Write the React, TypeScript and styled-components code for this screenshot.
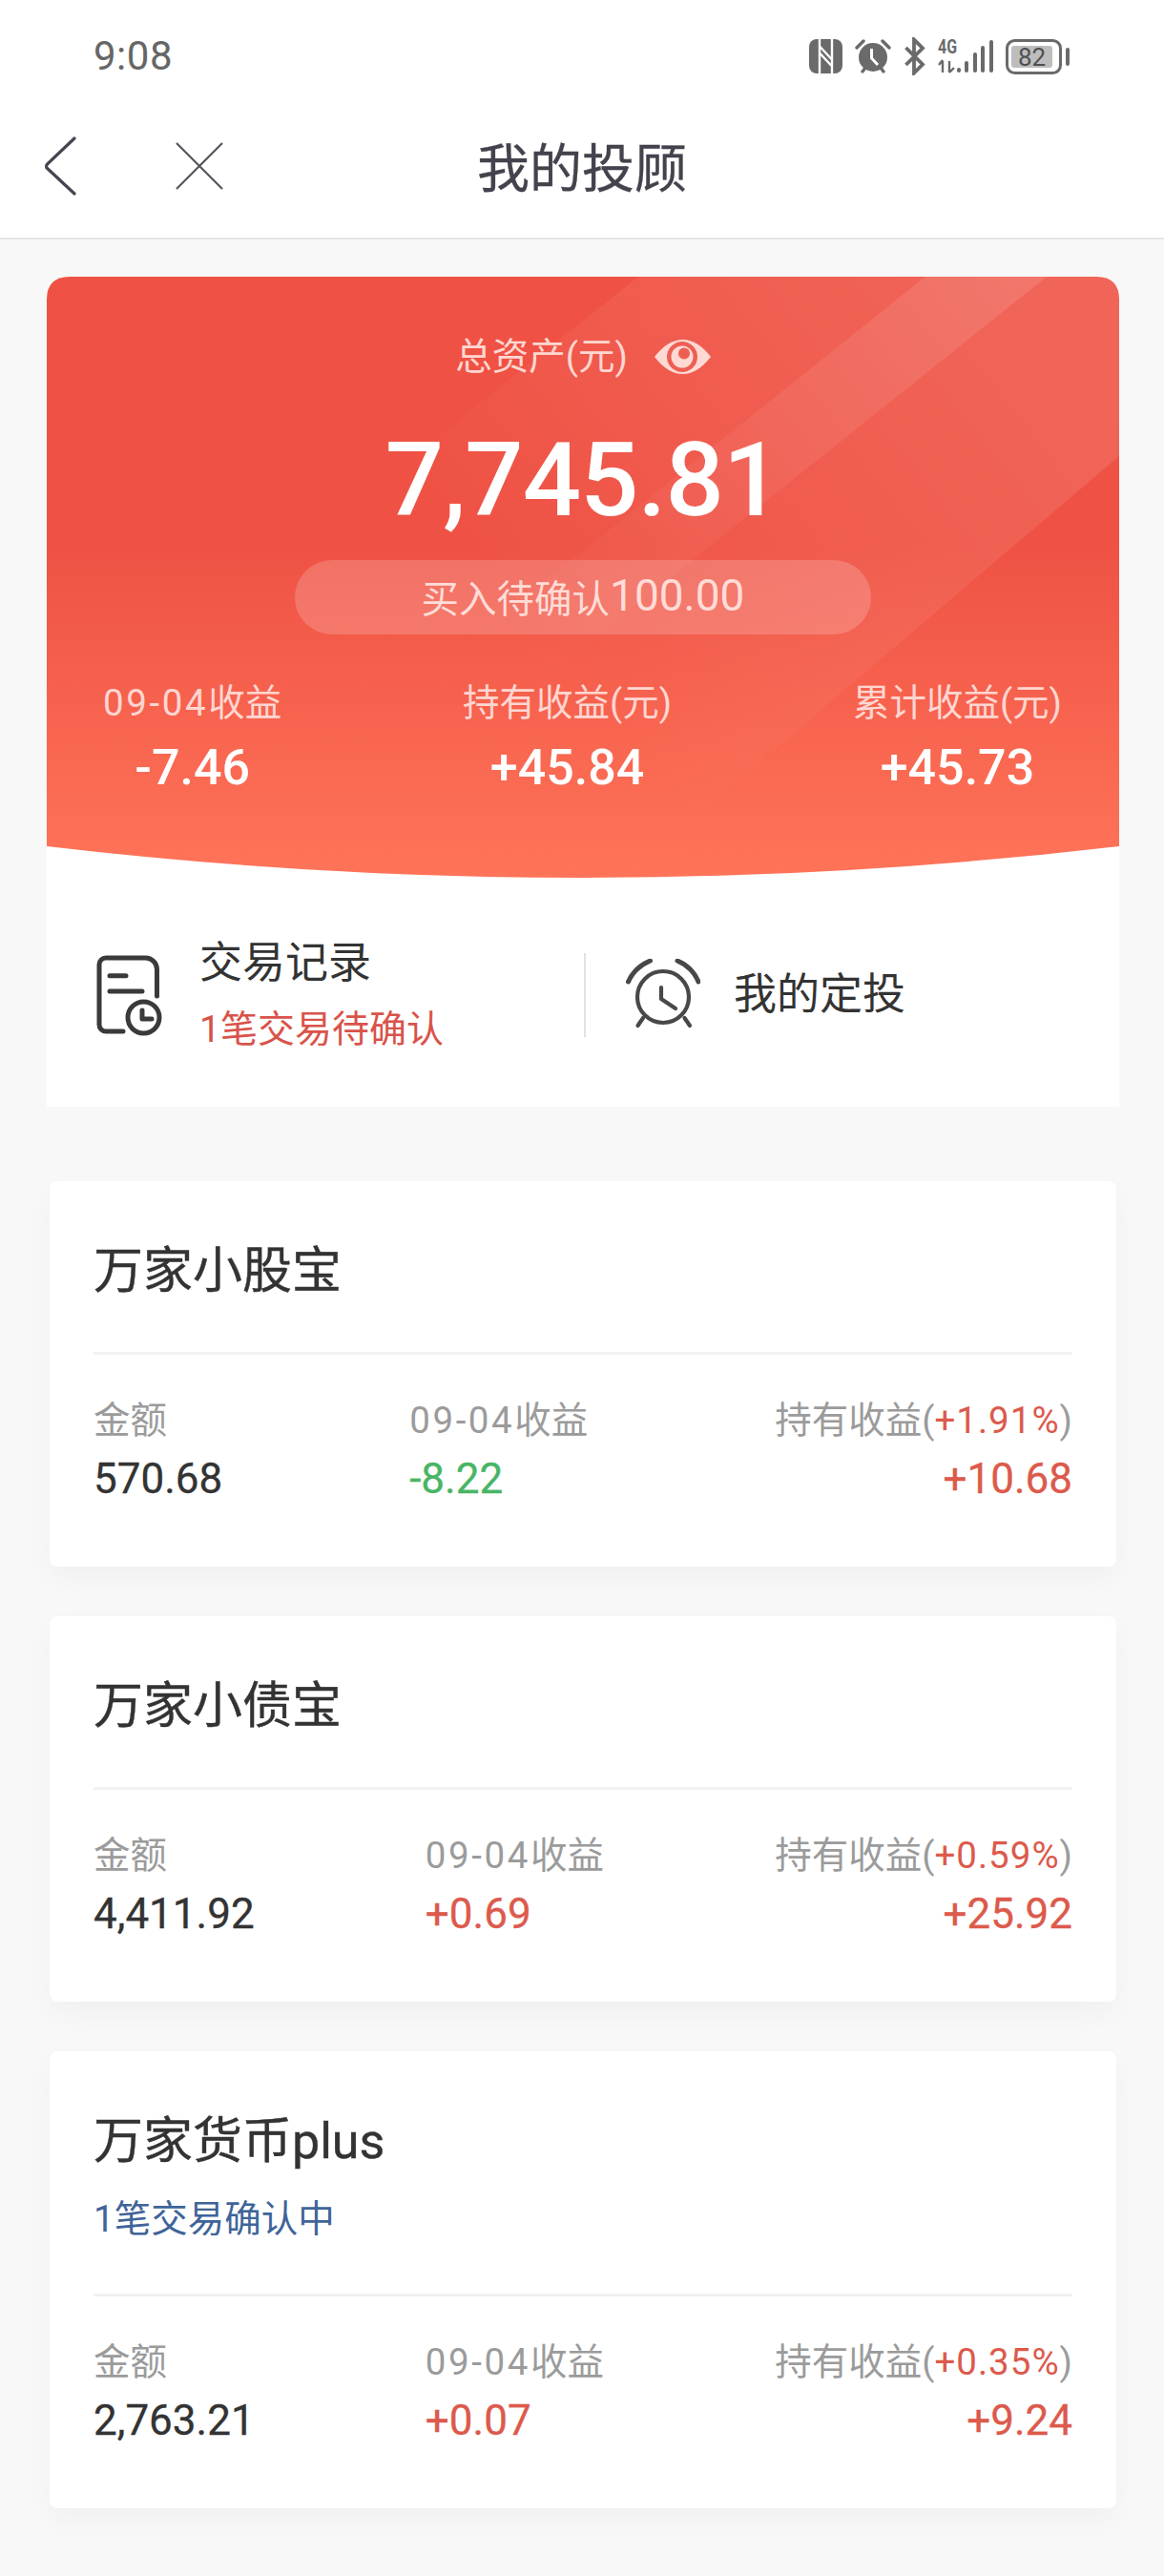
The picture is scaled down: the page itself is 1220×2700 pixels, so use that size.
import React from "react";
import styled, { createGlobalStyle } from "styled-components";

const Global = createGlobalStyle`
  html, body { margin: 0; padding: 0; background: #f8f8f8; }
  body { font-family: Roboto, "Noto Sans CJK SC", sans-serif; }
  * { box-sizing: border-box; }
`;

const Page = styled.div`
  width: 1220px;
  min-height: 2700px;
  background: #f8f8f8;
`;

const Header = styled.header`
  height: 251px;
  background: #fff;
  border-bottom: 2px solid #e6e6e6;
`;

const StatusBar = styled.div`
  height: 110px;
  padding: 8px 99px 0 98px;
  display: flex;
  align-items: center;
  justify-content: space-between;
`;

const Clock = styled.span`
  font-size: 42px;
  line-height: 44px;
  color: #666;
  letter-spacing: 0.5px;
`;

const StatusIcons = styled.div`
  display: flex;
  align-items: center;
  gap: 13px;
`;

const Nav = styled.nav`
  display: grid;
  grid-template-columns: 1fr auto 1fr;
  align-items: center;
  height: 128px;
`;

const NavLeft = styled.div`
  display: flex;
  align-items: center;
  gap: 104px;
  padding-left: 47px;
`;

const NavTitle = styled.h1`
  margin: 0;
  padding-top: 5px;
  font-size: 55px;
  line-height: 64px;
  font-weight: 400;
  -webkit-text-stroke: 0.3px #43434d;
  color: #43434d;
`;

const HeroCard = styled.section`
  margin: 39px 47px 0 49px;
  background: #fff;
  border-radius: 24px 24px 0 0;
`;

const HeroRed = styled.div`
  position: relative;
  height: 630px;
  padding-top: 62px;
  background: linear-gradient(180deg, #ef5244 0%, #ef5244 45%, #ff7459 100%);
  clip-path: path("M0 24 Q0 0 24 0 H1100 Q1124 0 1124 24 V597 Q562 663 0 597 Z");
`;

const HeroDecor = styled.svg`
  position: absolute;
  inset: 0;
`;

const HeroContent = styled.div`
  position: relative;
`;

const TotalLabel = styled.div`
  display: flex;
  align-items: center;
  justify-content: center;
  gap: 28px;
  height: 44px;
  font-size: 38.5px;
  line-height: 44px;
  color: #ffd6d1;
`;

const TotalValue = styled.div`
  margin-top: 47px;
  text-align: center;
  font-size: 108px;
  line-height: 120px;
  font-weight: 500;
  color: #fff;
  letter-spacing: -1px;
`;

const Pending = styled.div`
  margin: 24px auto 0;
  width: 604px;
  height: 78px;
  padding-bottom: 4px;
  border-radius: 39px;
  background: rgba(255, 255, 255, 0.18);
  display: flex;
  align-items: center;
  justify-content: center;
  font-size: 39.5px;
  color: #ffdcd7;
`;

const PendingAmount = styled.span`
  font-size: 46px;
`;

const Stats = styled.div`
  margin-top: 50px;
  padding: 0 60px 0 59px;
  display: flex;
  justify-content: space-between;
`;

const Stat = styled.div`
  text-align: center;
`;

const StatLabel = styled.div`
  font-size: 38.5px;
  line-height: 44px;
  color: #ffd6d1;
`;

const DateText = styled.span`
  letter-spacing: 2.6px;
`;

const StatValue = styled.div`
  margin-top: 16px;
  font-size: 52px;
  line-height: 60px;
  font-weight: 500;
  color: #fff;
`;

const Actions = styled.div`
  height: 240px;
  padding-top: 6px;
  display: grid;
  grid-template-columns: 563px 2px 1fr;
  align-items: center;
`;

const Action = styled.div<{ $gap: number; $pad: number }>`
  display: flex;
  align-items: center;
  gap: ${(p) => p.$gap}px;
  padding-left: ${(p) => p.$pad}px;
`;

const ActionDivider = styled.div`
  height: 88px;
  background: #e2e2e2;
`;

const ActionTitle = styled.div`
  font-size: 45px;
  line-height: 54px;
  color: #333;
`;

const ActionNote = styled.div`
  margin-top: 18px;
  font-size: 39px;
  line-height: 48px;
  color: #d9534a;
`;

const Cards = styled.div`
  margin: 78px 50px 0 52px;
  display: flex;
  flex-direction: column;
  gap: 52px;
`;

const Card = styled.article`
  padding: 65px 46px 64px;
  background: #fff;
  border-radius: 8px;
  box-shadow: 0 12px 30px rgba(0, 0, 0, 0.035);
`;

const CardTitle = styled.h2`
  margin: 0;
  font-size: 52px;
  line-height: 60px;
  font-weight: 400;
  -webkit-text-stroke: 0.4px #333;
  color: #333;
`;

const CardNote = styled.div`
  margin-top: 27px;
  font-size: 38.5px;
  line-height: 48px;
  color: #3f6499;
`;

const CardRule = styled.div`
  margin-top: 54px;
  height: 3px;
  background: #f2f2f2;
`;

const Metrics = styled.div`
  margin-top: 47px;
  display: flex;
  justify-content: space-between;
`;

const Metric = styled.div<{ $end?: boolean }>`
  text-align: ${(p) => (p.$end ? "right" : "left")};
`;

const MetricLabel = styled.div`
  font-size: 38.5px;
  line-height: 44px;
  color: #9b9b9b;
  white-space: nowrap;
`;

const Pct = styled.span`
  color: #dc5a4c;
  letter-spacing: 1px;
`;

const MetricValue = styled.div<{ $tone: "ink" | "up" | "down" }>`
  margin-top: 11px;
  font-size: 44px;
  line-height: 56px;
  white-space: nowrap;
  -webkit-text-stroke: 0.3px currentColor;
  color: ${(p) => (p.$tone === "up" ? "#dc5a4c" : p.$tone === "down" ? "#49b565" : "#333")};
`;

const G = "#6a6a6a";

const NfcIcon = () => (
  <svg width="35" height="36" viewBox="0 0 35 36">
    <rect width="35" height="36" rx="8" fill={G} />
    <path d="M11 -1V37M24 -1V37" stroke="#fff" strokeWidth="2.4" />
    <path d="M11.5 8L23.5 21M11.5 15L23.5 28" stroke="#fff" strokeWidth="2.4" />
  </svg>
);

const AlarmFilled = () => (
  <svg width="38" height="36" viewBox="0 0 38 36">
    <circle cx="19" cy="19" r="15" fill={G} />
    <path d="M2 9L9 2M36 9L29 2M8 34L11 30M30 34L27 30" stroke={G} strokeWidth="3.4" strokeLinecap="round" />
    <path d="M17.5 10V20L24 27" stroke="#fff" strokeWidth="3" fill="none" />
  </svg>
);

const BluetoothIcon = () => (
  <svg width="23" height="40" viewBox="0 0 23 40">
    <path d="M2.5 11L20 28.5L11 37.5V2.5L20 11.5L2.5 29" fill="none" stroke={G} strokeWidth="3.8" />
  </svg>
);

const SignalIcon = () => (
  <svg width="58" height="46" viewBox="0 -4 58 46">
    <text x="0" y="16" fontSize="20" fontWeight="700" fill={G} textLength="20" lengthAdjust="spacingAndGlyphs" fontFamily="Roboto, sans-serif">4G</text>
    <path d="M5 24V36M5 23L1 28M12 24V36M12 36L17 31" stroke={G} strokeWidth="2.4" fill="none" />
    <g fill={G}>
      <rect x="20" y="31" width="4" height="5" rx="2" />
      <rect x="28" y="24" width="4" height="12" rx="2" />
      <rect x="37" y="15" width="4" height="21" rx="2" />
      <rect x="45" y="8" width="4" height="28" rx="2" />
      <rect x="54" y="2" width="4" height="34" rx="2" />
    </g>
  </svg>
);

const BatteryIcon = () => (
  <svg width="67" height="37" viewBox="0 0 67 37">
    <rect x="1.5" y="1.5" width="56" height="34" rx="8" fill="none" stroke={G} strokeWidth="3" />
    <rect x="6" y="7" width="43" height="23" rx="3" fill="#bdbdbd" />
    <rect x="63" y="9" width="4" height="19" rx="2" fill={G} />
    <text x="27.5" y="28" fontSize="26" fill="#4f4f4f" textAnchor="middle" fontFamily="Roboto, sans-serif">82</text>
  </svg>
);

const BackIcon = () => (
  <svg width="33" height="62" viewBox="0 0 33 62">
    <path d="M31 2L2.5 29Q1 31 2 33L31 60" fill="none" stroke="#45454f" strokeWidth="3.2" strokeLinecap="round" />
  </svg>
);

const CloseIcon = () => (
  <svg width="50" height="50" viewBox="0 0 50 50">
    <path d="M1 1L49 49M49 1L1 49" stroke="#55555e" strokeWidth="2.2" />
  </svg>
);

const EyeIcon = () => (
  <svg width="59" height="36" viewBox="0 0 59 36">
    <path d="M0 18Q14 0 29.5 0T59 18Q45 36 29.5 36T0 18Z" fill="#ffd9d4" />
    <circle cx="29" cy="18" r="16" fill="#ee5f53" />
    <circle cx="29" cy="18" r="11.5" fill="#ffd9d4" />
    <circle cx="31" cy="14.5" r="6" fill="#ee5f53" />
  </svg>
);

const RecordIcon = () => (
  <svg width="70" height="85" viewBox="0 0 70 85">
    <g fill="none" stroke="#3a3a3a" strokeWidth="5" strokeLinecap="round" strokeLinejoin="round">
      <path d="M63.5 43V15a12 12 0 0 0-12-12H10a7 7 0 0 0-7 7V73a7 7 0 0 0 7 7H28" />
      <path d="M14 21.7H31M14 38H48" />
      <circle cx="49.5" cy="65.5" r="16.5" />
      <path d="M48 58V67H58" />
    </g>
  </svg>
);

const PlanIcon = () => (
  <svg width="78" height="76" viewBox="0 0 78 76">
    <g fill="none" stroke="#484848" strokeWidth="4.2" strokeLinecap="round" strokeLinejoin="round">
      <circle cx="39" cy="40" r="27" />
      <path d="M2.5 24Q9 9 25.5 2M54 2Q70 9 76 24" strokeWidth="5" />
      <path d="M37 30V42L52 52" />
      <path d="M12.5 70L18 62M67 70L61.5 62" />
    </g>
  </svg>
);

const HeroBands = () => (
  <HeroDecor width="1124" height="630" viewBox="0 0 1124 630">
    <defs>
      <linearGradient id="wide" gradientUnits="userSpaceOnUse" x1="1000" y1="0" x2="400" y2="480">
        <stop offset="0" stopColor="#fff" stopOpacity="0.11" />
        <stop offset="0.4" stopColor="#fff" stopOpacity="0.06" />
        <stop offset="0.8" stopColor="#fff" stopOpacity="0" />
      </linearGradient>
      <linearGradient id="strip" gradientUnits="userSpaceOnUse" x1="1000" y1="0" x2="400" y2="480">
        <stop offset="0" stopColor="#fff" stopOpacity="0.11" />
        <stop offset="0.55" stopColor="#fff" stopOpacity="0.04" />
        <stop offset="0.85" stopColor="#fff" stopOpacity="0" />
      </linearGradient>
    </defs>
    <polygon points="620,0 1124,0 1124,188 640,600 120,400" fill="url(#wide)" />
    <polygon points="921,0 1048,0 448,480 321,480" fill="url(#strip)" />
  </HeroDecor>
);

type Row = {
  title: string;
  note?: string;
  amount: string;
  day: string;
  dayTone: "up" | "down";
  pct: string;
  hold: string;
};

const rows: Row[] = [
  { title: "万家小股宝", amount: "570.68", day: "-8.22", dayTone: "down", pct: "+1.91%", hold: "+10.68" },
  { title: "万家小债宝", amount: "4,411.92", day: "+0.69", dayTone: "up", pct: "+0.59%", hold: "+25.92" },
  { title: "万家货币plus", note: "1笔交易确认中", amount: "2,763.21", day: "+0.07", dayTone: "up", pct: "+0.35%", hold: "+9.24" },
];

export default function App() {
  return (
    <Page>
      <Global />
      <Header>
        <StatusBar>
          <Clock>9:08</Clock>
          <StatusIcons>
            <NfcIcon />
            <AlarmFilled />
            <BluetoothIcon />
            <SignalIcon />
            <BatteryIcon />
          </StatusIcons>
        </StatusBar>
        <Nav>
          <NavLeft>
            <BackIcon />
            <CloseIcon />
          </NavLeft>
          <NavTitle>我的投顾</NavTitle>
          <div />
        </Nav>
      </Header>

      <HeroCard>
        <HeroRed>
          <HeroBands />
          <HeroContent>
            <TotalLabel>
              <span>总资产(元)</span>
              <EyeIcon />
            </TotalLabel>
            <TotalValue>7,745.81</TotalValue>
            <Pending>
              买入待确认<PendingAmount>100.00</PendingAmount>
            </Pending>
            <Stats>
              <Stat>
                <StatLabel>
                  <DateText>09-04</DateText>收益
                </StatLabel>
                <StatValue>-7.46</StatValue>
              </Stat>
              <Stat>
                <StatLabel>持有收益(元)</StatLabel>
                <StatValue>+45.84</StatValue>
              </Stat>
              <Stat>
                <StatLabel>累计收益(元)</StatLabel>
                <StatValue>+45.73</StatValue>
              </Stat>
            </Stats>
          </HeroContent>
        </HeroRed>
        <Actions>
          <Action $gap={38} $pad={52}>
            <RecordIcon />
            <div>
              <ActionTitle>交易记录</ActionTitle>
              <ActionNote>1笔交易待确认</ActionNote>
            </div>
          </Action>
          <ActionDivider />
          <Action $gap={35} $pad={42}>
            <PlanIcon />
            <ActionTitle>我的定投</ActionTitle>
          </Action>
        </Actions>
      </HeroCard>

      <Cards>
        {rows.map((r) => (
          <Card key={r.title}>
            <CardTitle>{r.title}</CardTitle>
            {r.note && <CardNote>{r.note}</CardNote>}
            <CardRule />
            <Metrics>
              <Metric>
                <MetricLabel>金额</MetricLabel>
                <MetricValue $tone="ink">{r.amount}</MetricValue>
              </Metric>
              <Metric>
                <MetricLabel>
                  <DateText>09-04</DateText>收益
                </MetricLabel>
                <MetricValue $tone={r.dayTone}>{r.day}</MetricValue>
              </Metric>
              <Metric $end>
                <MetricLabel>
                  持有收益(<Pct>{r.pct}</Pct>)
                </MetricLabel>
                <MetricValue $tone="up">{r.hold}</MetricValue>
              </Metric>
            </Metrics>
          </Card>
        ))}
      </Cards>
    </Page>
  );
}
